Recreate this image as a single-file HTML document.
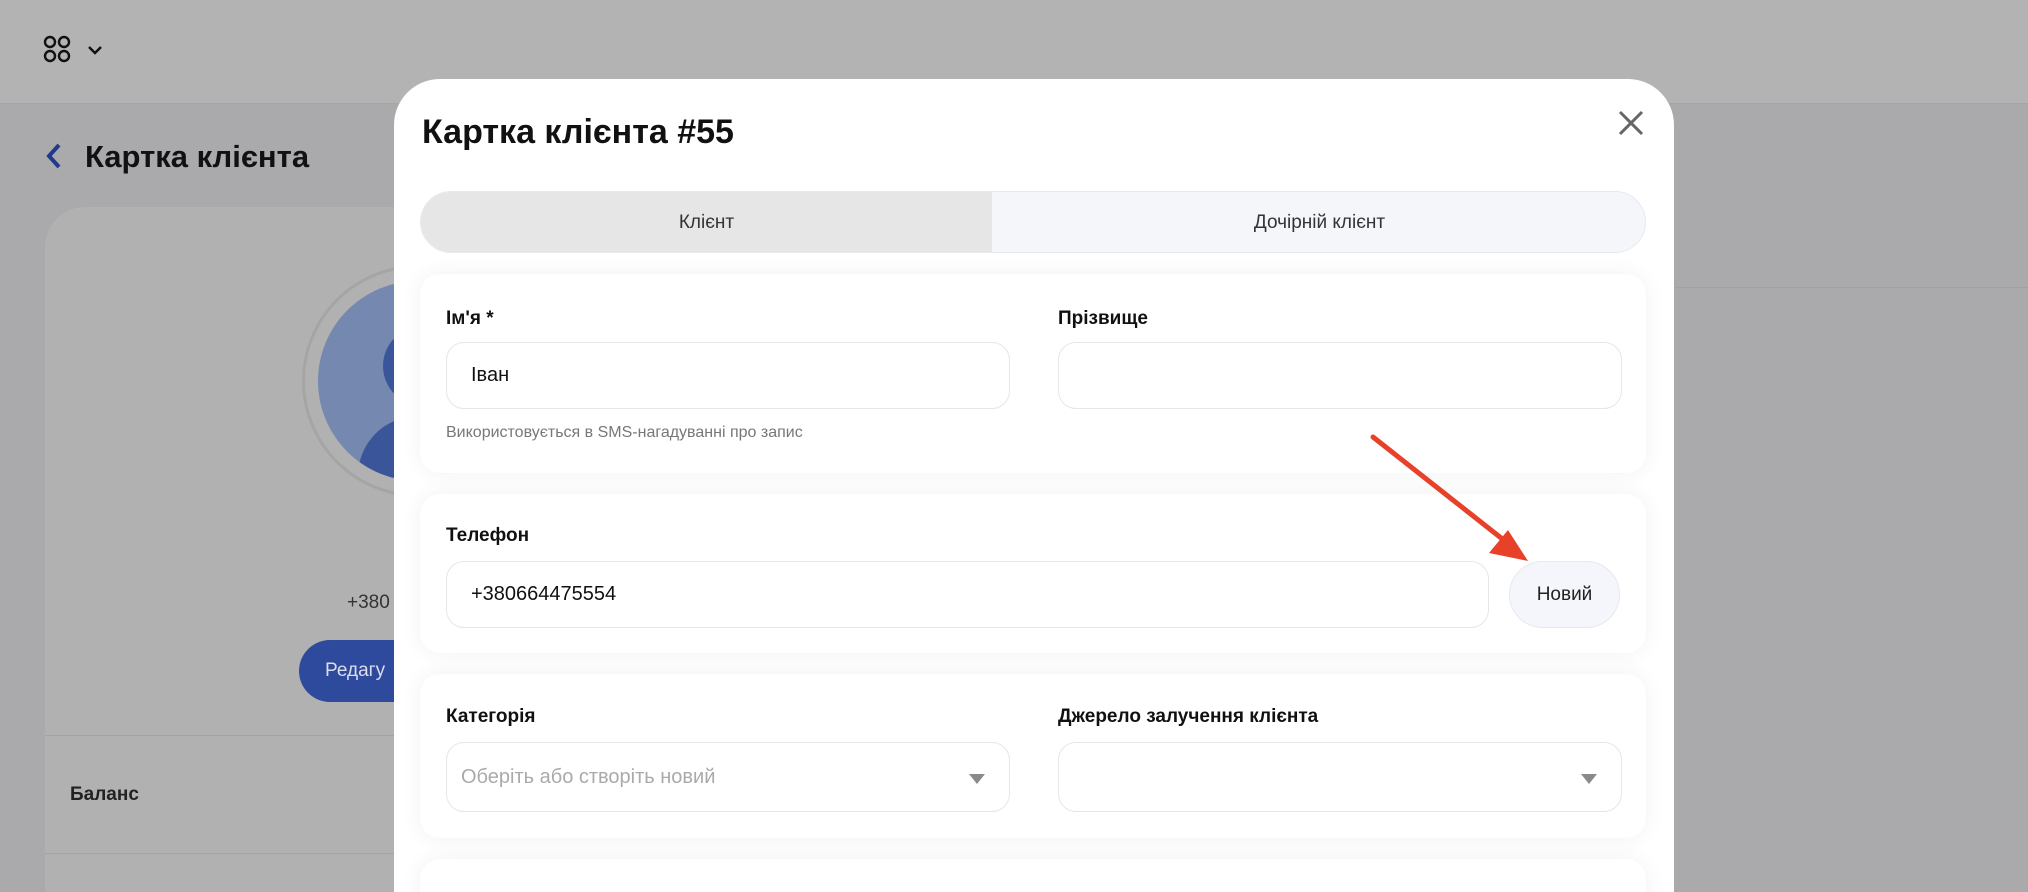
<!DOCTYPE html>
<html><head><meta charset="utf-8"><style>
*{box-sizing:border-box;margin:0;padding:0}
html,body{width:2028px;height:892px;overflow:hidden}
body{background:#aaaaac;font-family:"Liberation Sans",sans-serif;color:#111}
#w{position:relative;width:2028px;height:892px;overflow:hidden}
.abs{position:absolute}
.top{left:0;top:0;width:2028px;height:104px;background:#b3b3b3;border-bottom:1px solid #a5a5a5}
.pcard{left:45px;top:207px;width:420px;height:685px;background:#b1b1b1;border-radius:40px 40px 0 0}
.modal{left:394px;top:79px;width:1280px;height:813px;background:#fff;border-radius:46px 46px 0 0;overflow:hidden}
.card{position:absolute;left:26px;width:1226px;background:#fff;border-radius:20px;box-shadow:0 0 22px rgba(0,0,0,0.06)}
.lbl{position:absolute;font-weight:bold;font-size:19px}
.inp{position:absolute;border:1.5px solid #e6e6ea;border-radius:18px;background:#fff;font-size:20px;padding-left:24px;display:flex;align-items:center}
.tri{position:absolute;right:24px;top:31px;width:0;height:0;border-left:8px solid transparent;border-right:8px solid transparent;border-top:10px solid #8a8a8a}
</style></head><body><div id="w">
<div class="abs top"></div>
<svg class="abs" style="left:43px;top:35px" width="60" height="30" viewBox="0 0 60 30"><g fill="none" stroke="#111" stroke-width="2.4"><rect x="2" y="2" width="10" height="10" rx="5"/><rect x="16" y="2" width="10" height="10" rx="5"/><rect x="2" y="16" width="10" height="10" rx="5"/><rect x="16" y="16" width="10" height="10" rx="5"/><path d="M46 12l6 6 6-6"/></g></svg>
<svg class="abs" style="left:44px;top:142px" width="20" height="28"><path d="M15 3L5 14l10 11" fill="none" stroke="#1f3a8a" stroke-width="4"/></svg>
<div class="abs" style="left:85px;top:139px;font-size:31px;font-weight:bold">Картка клієнта</div>
<div class="abs pcard"></div>
<div class="abs" style="left:302px;top:265px;width:232px;height:232px;border-radius:50%;border:3px solid #a5a5a5"></div>
<div class="abs" style="left:318px;top:281px;width:200px;height:200px;border-radius:50%;background:#7488b0;overflow:hidden"><div class="abs" style="left:65px;top:45px;width:80px;height:80px;border-radius:50%;background:#3a559a"></div><div class="abs" style="left:40px;top:135px;width:130px;height:120px;border-radius:60px;background:#3a559a"></div></div>
<div class="abs" style="left:347px;top:592px;font-size:19px;color:#333">+380</div>
<div class="abs" style="left:299px;top:640px;width:150px;height:62px;border-radius:31px;background:#2d4a9c;color:#dde;font-size:19px;padding:20px 0 0 26px">Редагу</div>
<div class="abs" style="left:45px;top:735px;width:360px;height:1px;background:#a4a4a4"></div>
<div class="abs" style="left:45px;top:853px;width:360px;height:1px;background:#a4a4a4"></div>
<div class="abs" style="left:70px;top:784px;font-size:19px;font-weight:bold;color:#222">Баланс</div>
<div class="abs" style="left:1674px;top:287px;width:354px;height:1px;background:#a2a2a2"></div>

<div class="abs modal">
 <div class="abs" style="left:28px;top:34px;font-size:34px;font-weight:bold">Картка клієнта #55</div>
 <svg class="abs" style="left:1223px;top:30px" width="28" height="28"><path d="M3 3l22 22M25 3L3 25" stroke="#666" stroke-width="3"/></svg>
 <div class="abs" style="left:26px;top:112px;width:1226px;height:62px;border-radius:31px;background:#f5f6fa;border:1px solid #e8e9ef;overflow:hidden">
  <div class="abs" style="left:0;top:0;width:571px;height:62px;background:#e6e6e6"></div>
  <div class="abs" style="left:0;top:20px;width:571px;text-align:center;font-size:19px;color:#333">Клієнт</div>
  <div class="abs" style="left:571px;top:20px;width:655px;text-align:center;font-size:19px;color:#333">Дочірній клієнт</div>
 </div>
 <div class="card" style="top:195px;height:199px">
  <div class="lbl" style="left:26px;top:34px">Ім'я *</div>
  <div class="inp" style="left:26px;top:68px;width:564px;height:67px">Іван</div>
  <div class="abs" style="left:26px;top:150px;font-size:16px;color:#777">Використовується в SMS-нагадуванні про запис</div>
  <div class="lbl" style="left:638px;top:34px">Прізвище</div>
  <div class="inp" style="left:638px;top:68px;width:564px;height:67px"></div>
 </div>
 <div class="card" style="top:415px;height:159px">
  <div class="lbl" style="left:26px;top:31px">Телефон</div>
  <div class="inp" style="left:26px;top:67px;width:1043px;height:67px">+380664475554</div>
  <div class="abs" style="left:1089px;top:67px;width:111px;height:67px;border-radius:34px;background:#f5f6fb;border:1.5px solid #e8e9f0;font-size:19px;color:#222;text-align:center;padding-top:22px">Новий</div>
 </div>
 <div class="card" style="top:595px;height:164px">
  <div class="lbl" style="left:26px;top:32px">Категорія</div>
  <div class="inp" style="left:26px;top:68px;width:564px;height:70px;color:#aaa;padding-left:14px">Оберіть або створіть новий<div class="tri"></div></div>
  <div class="lbl" style="left:638px;top:32px">Джерело залучення клієнта</div>
  <div class="inp" style="left:638px;top:68px;width:564px;height:70px"><div class="tri"></div></div>
 </div>
 <div class="card" style="top:780px;height:120px"></div>
</div>
<svg class="abs" style="left:0;top:0" width="2028" height="892"><path d="M1373 437L1510 545" stroke="#e8412a" stroke-width="5" stroke-linecap="round"/><path d="M1528 561L1489 553L1508 530Z" fill="#e8412a"/></svg>
</div></body></html>
